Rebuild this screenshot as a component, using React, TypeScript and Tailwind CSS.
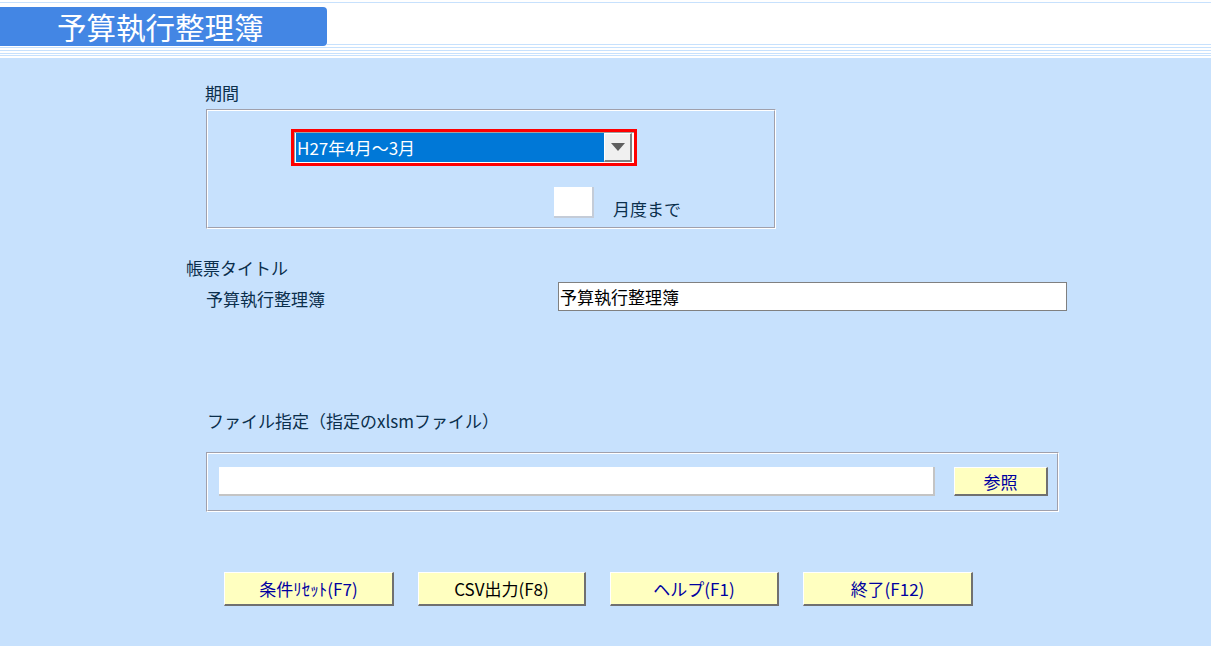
import React from "react";

const FONT = { fontFamily: '"Noto Sans CJK JP", "Noto Sans", sans-serif' };

function Groove({ className, children }: { className?: string; children?: React.ReactNode }) {
  return (
    <div className={"border border-t-[#a0a0ac] border-l-[#a0a0ac] border-b-white border-r-white " + (className ?? "")}>
      <div className="w-full h-full border border-t-white border-l-white border-b-[#a0a0ac] border-r-[#a0a0ac]">
        {children}
      </div>
    </div>
  );
}

function YButton({ label, w, dark }: { label: string; w: string; dark?: boolean }) {
  return (
    <div
      className={
        "h-[34px] bg-[#ffffc0] border-t border-l border-white border-b-2 border-r-2 border-b-[#707070] border-r-[#707070] flex items-center justify-center text-[17px] leading-none " +
        w +
        (dark ? " text-black" : " text-[#0000a0]")
      }
    >
      {label}
    </div>
  );
}

export default function App() {
  return (
    <div style={FONT} className="w-[1211px] h-[646px] bg-[#c7e1fd] overflow-hidden text-[#0b2f4c]">
      {/* header */}
      <div className="h-[58px] bg-white flex flex-col">
        <div className="h-[2px]" />
        <div className="h-[1px] bg-[#c7e1fd]" />
        <div className="h-[4px]" />
        <div className="h-[39px] flex">
          <div className="w-[327px] h-full bg-[#4386e4] rounded-r-[4px] flex items-center pl-[57px] text-white text-[29.5px] leading-none">
            予算執行整理簿
          </div>
          <div className="flex-1 flex flex-col justify-end">
            <div className="h-[1px] bg-[#c7e1fd] mb-[1px]" />
          </div>
        </div>
        <div className="h-[1px]" />
        <div className="h-[1px] bg-[#c7e1fd]" />
        <div className="h-[2px]" />
        <div className="h-[1px] bg-[#c7e1fd]" />
        <div className="h-[2px]" />
        <div className="h-[1px] bg-[#c7e1fd]" />
        <div className="h-[1px]" />
        <div className="h-[1px] bg-[#c7e1fd]" />
        <div className="h-[2px]" />
      </div>

      {/* body */}
      <div className="pl-[186px] flex flex-col items-start">
        <div className="mt-[25px] ml-[19px] h-[20px] leading-[20px] text-[17px]">期間</div>
        <Groove className="mt-[6px] ml-[20px] w-[570px] h-[120px]">
          <div className="flex flex-col items-start pt-[18px] pl-[83px]">
            <div className="w-[346px] h-[37px] border-[3px] border-[#ff0000]">
              <div className="w-full h-full bg-white border-l border-t border-l-[#a0a0a0] border-t-[#a0a0a0] pl-[1px] pt-[0px] pr-[2px] pb-[1px] flex">
                <div className="flex-1 bg-[#0078d7] text-white text-[17px] leading-none flex items-center pl-[1px]">
                  H27年4月～3月
                </div>
                <div className="w-[28px] bg-[#f0f0f0] border-t border-l border-white border-b-2 border-r-2 border-b-[#808080] border-r-[#808080] flex items-center justify-center">
                  <svg width="14" height="8" viewBox="0 0 14 8">
                    <polygon points="0,0 14,0 7,8" fill="#5f5f5f" />
                  </svg>
                </div>
              </div>
            </div>
            <div className="flex items-end mt-[21px] ml-[263px]">
              <div className="w-[40px] h-[31px] bg-white border-b-2 border-r-2 border-b-[#c4ccd8] border-r-[#c4ccd8]" />
              <div className="ml-[19px] text-[17px] leading-[20px] mb-[-1px]">月度まで</div>
            </div>
          </div>
        </Groove>

        <div className="mt-[29px] h-[20px] leading-[20px] text-[17px]">帳票タイトル</div>
        <div className="mt-[4px] ml-[20px] flex items-center">
          <div className="w-[352px] text-[17px] leading-[20px] pt-[5px]">予算執行整理簿</div>
          <div className="w-[509px] h-[29px] bg-white border border-[#808080] flex items-center pl-[1px] text-black text-[17px] leading-none">
            予算執行整理簿
          </div>
        </div>

        <div className="mt-[100px] ml-[21px] h-[20px] leading-[20px] text-[17px]">ファイル指定（指定のxlsmファイル）</div>
        <Groove className="mt-[21px] ml-[20px] w-[853px] h-[60px]">
          <div className="flex items-start pt-[13px] pl-[11px]">
            <div className="w-[716px] h-[29px] bg-white border-b-2 border-r-2 border-b-[#c4c4c4] border-r-[#c4c4c4]" />
            <div className="ml-[19px]">
              <YButton label="参照" w="w-[94px] !h-[29px]" />
            </div>
          </div>
        </Groove>

        <div className="mt-[60px] ml-[38px] flex gap-[24px]">
          <YButton label="条件ﾘｾｯﾄ(F7)" w="w-[170px]" />
          <YButton label="CSV出力(F8)" w="w-[168px]" dark />
          <YButton label="ヘルプ(F1)" w="w-[169px]" />
          <YButton label="終了(F12)" w="w-[170px]" />
        </div>
      </div>
    </div>
  );
}
